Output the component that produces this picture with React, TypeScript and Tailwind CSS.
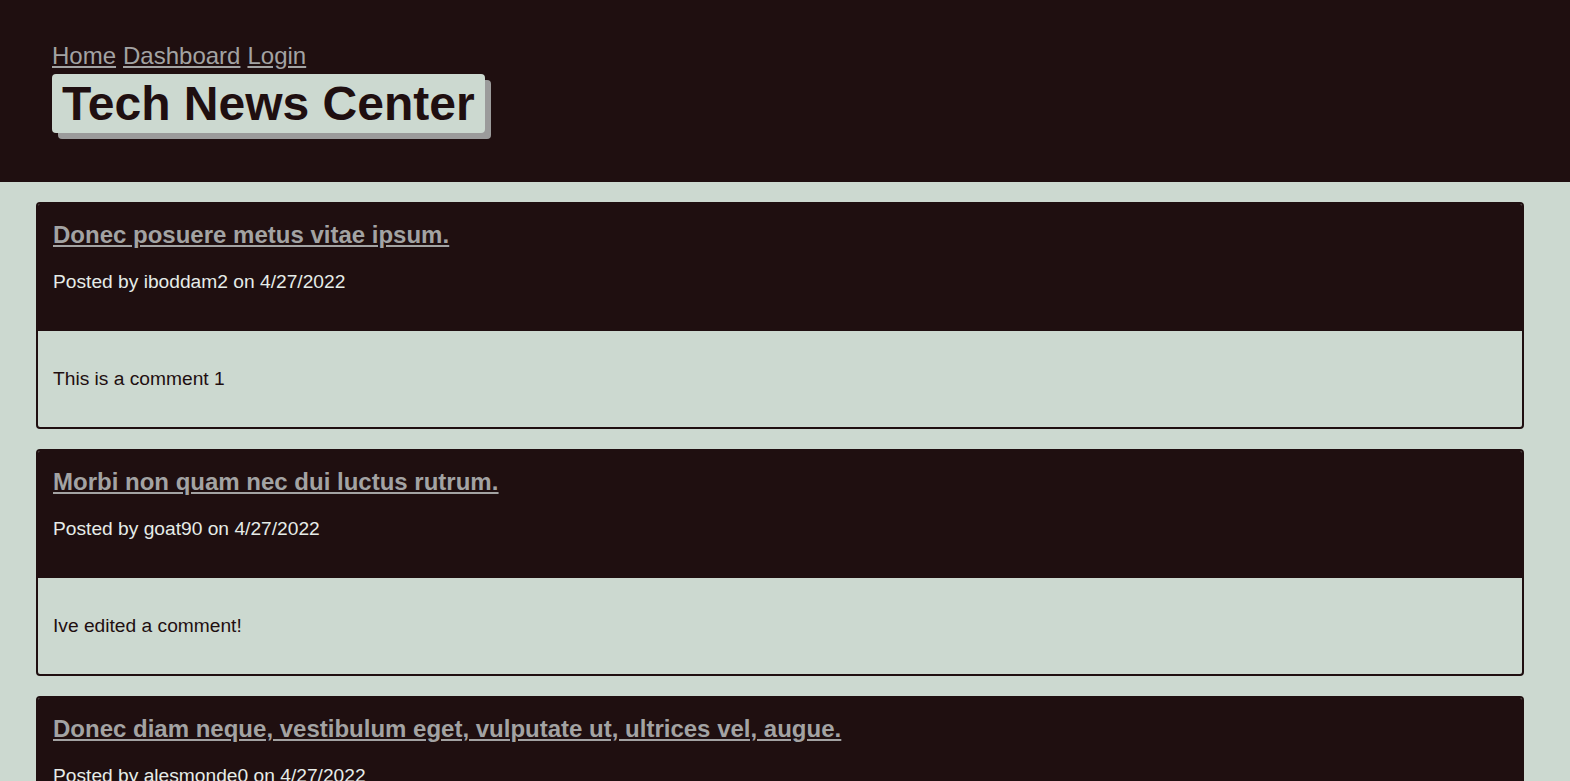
import React from 'react';

const posts = [
  { title: 'Donec posuere metus vitae ipsum.', user: 'iboddam2', date: '4/27/2022', comment: 'This is a comment 1' },
  { title: 'Morbi non quam nec dui luctus rutrum.', user: 'goat90', date: '4/27/2022', comment: 'Ive edited a comment!' },
  { title: 'Donec diam neque, vestibulum eget, vulputate ut, ultrices vel, augue.', user: 'alesmonde0', date: '4/27/2022', comment: 'Great post!' },
];

export default function App() {
  return (
    <div className="min-h-screen bg-[#ccd9d0] font-['Liberation_Sans',Arial,sans-serif]">
      <header className="bg-[#1f0f10] pl-[52px] pt-[42px] pb-[48px] border-b border-[#1f0f10]">
        <nav className="flex gap-[7px] text-[24px] leading-[28px] text-[#a3a3a3]">
          <a href="#" className="underline">Home</a>
          <a href="#" className="underline">Dashboard</a>
          <a href="#" className="underline">Login</a>
        </nav>
        <div className="mt-[4px] inline-block rounded-[4px] bg-[#ccd9d0] px-[10px] shadow-[6px_6px_0_#9b9b9b]">
          <h1 className="text-[48px] font-bold leading-[59px] text-[#1f0f10]">Tech News Center</h1>
        </div>
      </header>
      <main className="ml-[36px] mr-[46px] pt-[20px] flex flex-col gap-[20px] pb-[20px]">
        {posts.map((p, i) => (
          <article key={i} className="rounded-[4px] border-2 border-[#1f0f10] overflow-hidden">
            <div className="bg-[#1f0f10] px-[15px] pt-[17px] pb-[37px]">
              <h2 className="text-[24px] font-bold leading-[28px] text-[#a3a3a3] underline">
                <a href="#">{p.title}</a>
              </h2>
              <p className="mt-[21px] text-[19.2px] leading-[24px] text-[#e6ece8]">
                Posted by {p.user} on {p.date}
              </p>
            </div>
            <div className="px-[15px] pt-[36px] pb-[36px]">
              <p className="text-[19.2px] leading-[24px] text-[#1f0f10]">{p.comment}</p>
            </div>
          </article>
        ))}
      </main>
    </div>
  );
}
